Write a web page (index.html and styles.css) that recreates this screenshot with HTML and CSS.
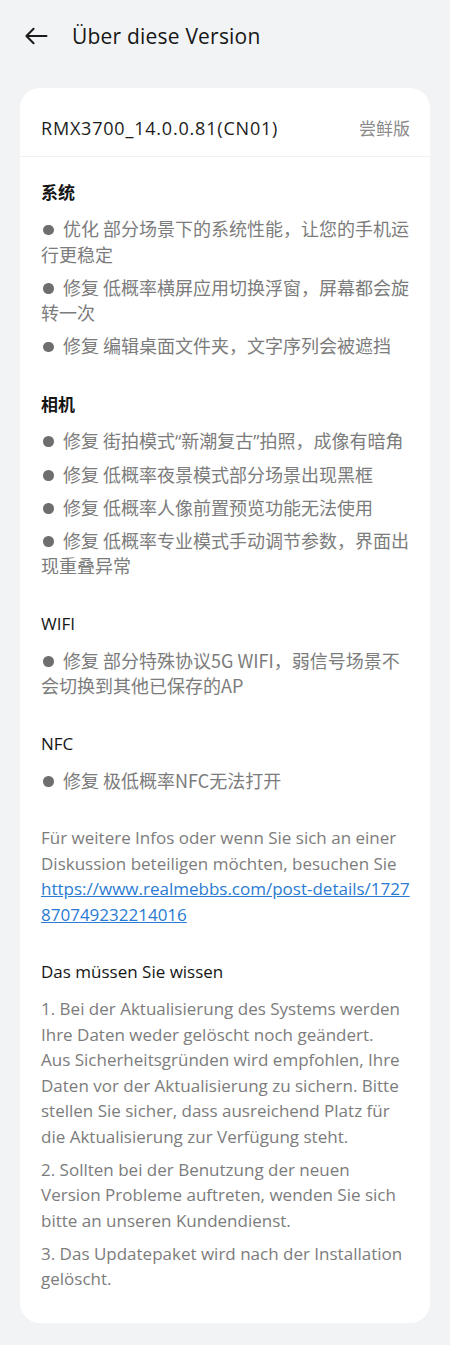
FILE: index.html
```html
<!DOCTYPE html>
<html lang="de">
<head>
<meta charset="utf-8">
<title>Über diese Version</title>
<link rel="stylesheet" href="styles.css">
</head>
<body>
<header class="topbar">
  <svg class="back" viewBox="0 0 24 24" width="24" height="24" aria-hidden="true">
    <path d="M22.5 12H2.5M9.6 4.8L2.4 12l7.2 7.2" fill="none" stroke="#1a1a1a" stroke-width="2" stroke-linecap="round" stroke-linejoin="round"/>
  </svg>
  <h1 class="title">Über diese Version</h1>
</header>

<main class="card">
  <div class="version-row">
    <span class="version">RMX3700_14.0.0.81(CN01)</span>
    <span class="tag">尝鲜版</span>
  </div>

  <div class="content">
    <section class="group">
      <h2 class="group-title cjk">系统</h2>
      <ul class="items cjk-items">
        <li><span class="dot"></span>优化 部分场景下的系统性能，让您的手机运行更稳定</li>
        <li><span class="dot"></span>修复 低概率横屏应用切换浮窗，屏幕都会旋转一次</li>
        <li><span class="dot"></span>修复 编辑桌面文件夹，文字序列会被遮挡</li>
      </ul>
    </section>

    <section class="group">
      <h2 class="group-title cjk">相机</h2>
      <ul class="items cjk-items">
        <li><span class="dot"></span>修复 街拍模式<span class="q">“</span>新潮复古<span class="q">”</span>拍照，成像有暗角</li>
        <li><span class="dot"></span>修复 低概率夜景模式部分场景出现黑框</li>
        <li><span class="dot"></span>修复 低概率人像前置预览功能无法使用</li>
        <li><span class="dot"></span>修复 低概率专业模式手动调节参数，界面出现重叠异常</li>
      </ul>
    </section>

    <section class="group">
      <h2 class="group-title">WIFI</h2>
      <ul class="items cjk-items">
        <li><span class="dot"></span>修复 部分特殊协议5G WIFI，弱信号场景不会切换到其他已保存的AP</li>
      </ul>
    </section>

    <section class="group">
      <h2 class="group-title">NFC</h2>
      <ul class="items cjk-items">
        <li><span class="dot"></span>修复 极低概率NFC无法打开</li>
      </ul>
    </section>

    <p class="info">Für weitere Infos oder wenn Sie sich an einer<br>Diskussion beteiligen möchten, besuchen Sie<br><a class="link" href="#">https://www.realmebbs.com/post-details/1727<br>870749232214016</a></p>

    <section class="group">
      <h2 class="group-title">Das müssen Sie wissen</h2>
      <ol class="items notes">
        <li>1. Bei der Aktualisierung des Systems werden<br>Ihre Daten weder gelöscht noch geändert.<br>Aus Sicherheitsgründen wird empfohlen, Ihre<br>Daten vor der Aktualisierung zu sichern. Bitte<br>stellen Sie sicher, dass ausreichend Platz für<br>die Aktualisierung zur Verfügung steht.</li>
        <li>2. Sollten bei der Benutzung der neuen Version Probleme auftreten, wenden Sie sich bitte an unseren Kundendienst.</li>
        <li>3. Das Updatepaket wird nach der Installation gelöscht.</li>
      </ol>
    </section>
  </div>
</main>
</body>
</html>
```

FILE: styles.css
```css
* { box-sizing: border-box; }

html, body {
  margin: 0;
  padding: 0;
  background: #f2f3f5;
}

body {
  font-family: "Open Sans", "Noto Sans CJK SC", sans-serif;
  color: #1a1a1a;
  width: 450px;
  min-height: 1345px;
}

.topbar {
  height: 72px;
  display: flex;
  align-items: center;
  padding-left: 24px;
}

.back {
  flex: none;
  width: 24px;
  height: 24px;
}

.title {
  margin: 0 0 0 24px;
  font-size: 21px;
  font-weight: 400;
  letter-spacing: 0.2px;
  color: #161616;
  line-height: 28px;
}

.card {
  margin: 16px 20px 0;
  background: #ffffff;
  border-radius: 20px;
  padding-bottom: 31px;
}

.version-row {
  display: flex;
  justify-content: space-between;
  align-items: center;
  padding: 28px 20px 16px 21px;
  line-height: 24px;
  border-bottom: 1px solid #f0f0f0;
}

.version {
  font-size: 18px;
  letter-spacing: 0.8px;
  color: #1c1c1c;
}

.tag {
  font-family: "Noto Sans CJK SC", sans-serif;
  font-size: 17px;
  color: #8a8a8a;
}

.content {
  padding: 22px 17px 0 21px;
  display: flex;
  flex-direction: column;
  gap: 32px;
}

.group {
  margin: 0;
}

.group-title {
  margin: 0 0 12px;
  font-size: 17px;
  font-weight: 400;
  line-height: 25px;
  color: #161616;
}

.group-title.cjk {
  font-family: "Noto Sans CJK SC", sans-serif;
  font-weight: 700;
}

.items {
  list-style: none;
  margin: 0;
  padding: 0;
  display: flex;
  flex-direction: column;
  gap: 7.5px;
}

.items li {
  font-size: 17px;
  line-height: 25.5px;
  color: #7c7c7c;
}

.cjk-items li {
  font-family: "Noto Sans CJK SC", sans-serif;
  font-size: 18px;
}

.q {
  font-family: "Open Sans", sans-serif;
}

.dot {
  display: inline-block;
  width: 10.5px;
  height: 10.5px;
  border-radius: 50%;
  background: #6e6e6e;
  margin: 0 9.5px 0 2px;
  vertical-align: 1px;
}

.info {
  margin: 0;
  font-size: 17px;
  line-height: 25.5px;
  color: #7c7c7c;
}

.link {
  color: #2a7bd4;
  text-decoration: underline;
  white-space: nowrap;
}
```
